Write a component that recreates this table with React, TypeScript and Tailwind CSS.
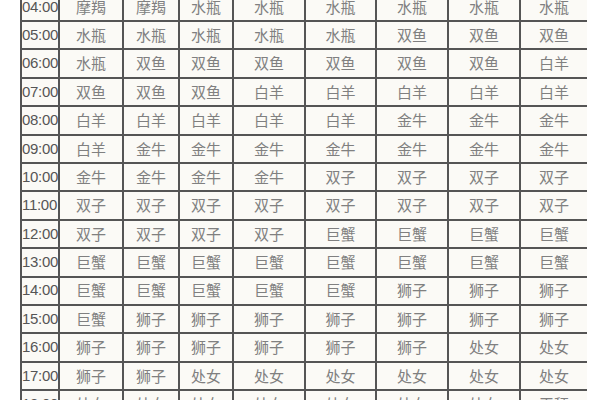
const rows: [string, string[]][] = [
  ["04:00", ["摩羯", "摩羯", "水瓶", "水瓶", "水瓶", "水瓶", "水瓶", "水瓶"]],
  ["05:00", ["水瓶", "水瓶", "水瓶", "水瓶", "水瓶", "双鱼", "双鱼", "双鱼"]],
  ["06:00", ["水瓶", "双鱼", "双鱼", "双鱼", "双鱼", "双鱼", "双鱼", "白羊"]],
  ["07:00", ["双鱼", "双鱼", "双鱼", "白羊", "白羊", "白羊", "白羊", "白羊"]],
  ["08:00", ["白羊", "白羊", "白羊", "白羊", "白羊", "金牛", "金牛", "金牛"]],
  ["09:00", ["白羊", "金牛", "金牛", "金牛", "金牛", "金牛", "金牛", "金牛"]],
  ["10:00", ["金牛", "金牛", "金牛", "金牛", "双子", "双子", "双子", "双子"]],
  ["11:00", ["双子", "双子", "双子", "双子", "双子", "双子", "双子", "双子"]],
  ["12:00", ["双子", "双子", "双子", "双子", "巨蟹", "巨蟹", "巨蟹", "巨蟹"]],
  ["13:00", ["巨蟹", "巨蟹", "巨蟹", "巨蟹", "巨蟹", "巨蟹", "巨蟹", "巨蟹"]],
  ["14:00", ["巨蟹", "巨蟹", "巨蟹", "巨蟹", "巨蟹", "狮子", "狮子", "狮子"]],
  ["15:00", ["巨蟹", "狮子", "狮子", "狮子", "狮子", "狮子", "狮子", "狮子"]],
  ["16:00", ["狮子", "狮子", "狮子", "狮子", "狮子", "狮子", "处女", "处女"]],
  ["17:00", ["狮子", "狮子", "处女", "处女", "处女", "处女", "处女", "处女"]],
  ["18:00", ["处女", "处女", "处女", "处女", "处女", "处女", "处女", "天秤"]],
]

const App = () => {
  return (
    <div className="w-[600px] h-[400px] overflow-hidden bg-white">
      {/* table starts a bit above the viewport, cut off like the screenshot */}
      <div className="ml-[20px] mt-[-6.4px] w-[567px] border-l-2 border-[#555] bg-[#fbfaf6]">
        {rows.map(([time, signs]) => (
          <div
            key={time}
            className="grid grid-cols-[38px_64px_56px_54px_72px_71px_72px_72px_66px] h-[28.4px]"
          >
            <div
              className="flex items-center border-r-2 border-b-2 border-[#555] text-[15px] text-[#555] tracking-[-0.3px] overflow-hidden whitespace-nowrap"
              style={{ fontFamily: '"Liberation Sans", Arial, sans-serif' }}
            >
              {time}
            </div>
            {signs.map((s, i) => (
              <div
                key={i}
                className={
                  i === signs.length - 1
                    ? "flex items-center justify-center border-b-2 border-[#555] text-[15px] text-[#808080]"
                    : "flex items-center justify-center border-r-2 border-b-2 border-[#555] text-[15px] text-[#808080]"
                }
                style={{ fontFamily: '"Noto Sans CJK SC", "Noto Sans", sans-serif' }}
              >
                {s}
              </div>
            ))}
          </div>
        ))}
      </div>
    </div>
  )
}

export default App
